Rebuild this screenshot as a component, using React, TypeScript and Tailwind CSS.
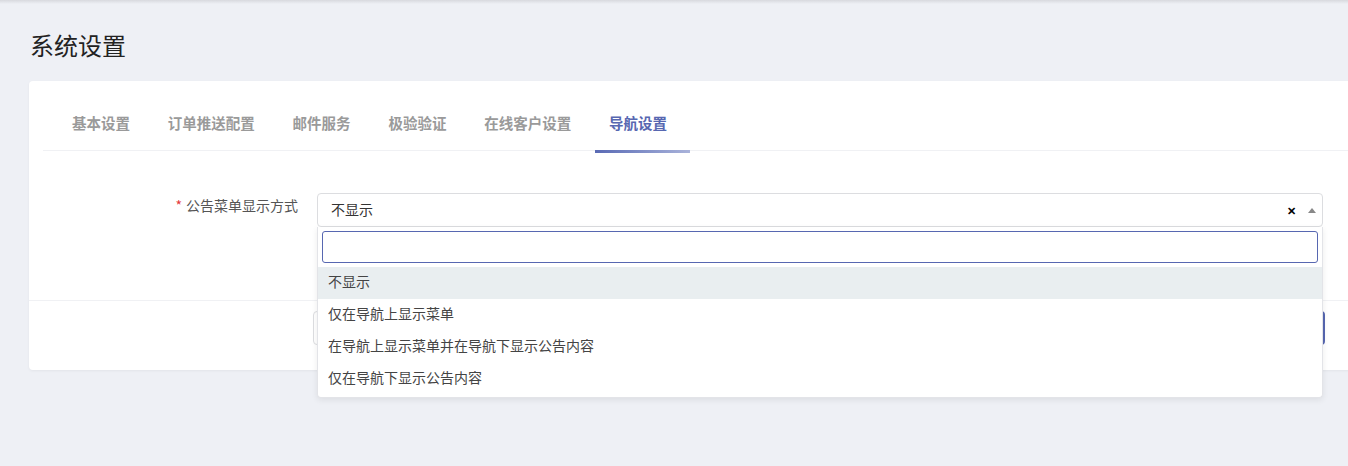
import React, { useState } from 'react';

const tabs = ['基本设置', '订单推送配置', '邮件服务', '极验验证', '在线客户设置', '导航设置'];

const options = ['不显示', '仅在导航上显示菜单', '在导航上显示菜单并在导航下显示公告内容', '仅在导航下显示公告内容'];

const App: React.FC = () => {
  const [activeTab] = useState(5);
  const [value] = useState(options[0]);
  const [hovered, setHovered] = useState(0);

  return (
    <div
      className="min-h-[466px] w-full overflow-hidden bg-[#eef0f5] text-[#333]"
      style={{ fontFamily: '"Noto Sans CJK SC", "Noto Sans", sans-serif' }}
    >
      {/* shadow of the header bar above */}
      <div className="h-[4px] bg-linear-to-b from-[#d8d9de] to-transparent" />

      <div className="pl-[30px] pt-[25px] mb-[20px]">
        <h1 className="text-[24px] leading-[32px] font-normal text-[#222]">系统设置</h1>
      </div>

      <div className="ml-[29px] w-[1340px] bg-white rounded-[4px] shadow-[0_1px_3px_rgba(0,0,0,0.05)]">
        {/* tabs */}
        <div className="pt-[14px] pl-[14px]">
          <div className="flex h-[56px] gap-[37.8px] pl-[29px] border-b border-[#f0f1f4]">
            {tabs.map((tab, i) => (
              <div
                key={tab}
                className={
                  'relative flex items-center text-[14.5px] font-semibold cursor-pointer ' +
                  (i === activeTab ? 'text-[#5767b1]' : 'text-[#9a9a9a]')
                }
              >
                {tab}
                {i === activeTab && (
                  <span className="absolute left-[-14px] w-[95px] bottom-[-3px] h-[3px] bg-linear-to-r from-[#5a6ab4] to-[#aab3da]" />
                )}
              </div>
            ))}
          </div>
        </div>

        {/* form */}
        <div className="pt-[42px] pb-[73px] flex">
          <div className="w-[269px] text-right text-[14px] leading-[20px] mt-[2px] text-[#555]">
            <span className="text-[#e4393c] mr-[4px]">*</span>
            公告菜单显示方式
          </div>
          <div className="relative ml-[19px] w-[1006px] z-10">
            <div className="flex items-center h-[34px] border border-[#dcdde0] rounded-[4px] pl-[13px] pr-[6px] text-[14px] text-[#333]">
              <span className="flex-1 pb-[1px]">{value}</span>
              <span className="text-[11px] font-bold text-black leading-none mr-[12px]">✕</span>
              <span className="w-0 h-0 border-l-[4px] border-r-[4px] border-b-[5px] border-l-transparent border-r-transparent border-b-[#888]" />
            </div>

            {/* dropdown */}
            <div className="absolute left-0 right-0 top-full bg-white border border-[#e3e4e8] border-t-0 rounded-b-[4px] shadow-[0_2px_6px_rgba(0,0,0,0.08)] pb-[2px]">
              <div className="p-[4px]">
                <input className="w-full h-[32px] border border-[#5767b1] rounded-[3px] outline-none px-2 text-[14px]" />
              </div>
              {options.map((opt, i) => (
                <div
                  key={opt}
                  onMouseEnter={() => setHovered(i)}
                  className={
                    'h-[32px] flex items-center pl-[10px] pb-[3px] text-[14px] text-[#444] ' +
                    (i === hovered ? 'bg-[#e9eef0]' : '')
                  }
                >
                  {opt}
                </div>
              ))}
            </div>
          </div>
        </div>

        {/* footer: buttons sit under the open dropdown */}
        <div className="border-t border-[#f0f1f4] pt-[10px] pb-[25px] pl-[284px] pr-[44px] flex justify-between">
          <button aria-label="重置" className="h-[34px] w-[80px] border border-[#dcdde0] rounded-[4px] bg-white" />
          <button aria-label="保存" className="h-[34px] w-[80px] rounded-[4px] bg-[#5767b1]" />
        </div>
      </div>
    </div>
  );
};

export default App;
